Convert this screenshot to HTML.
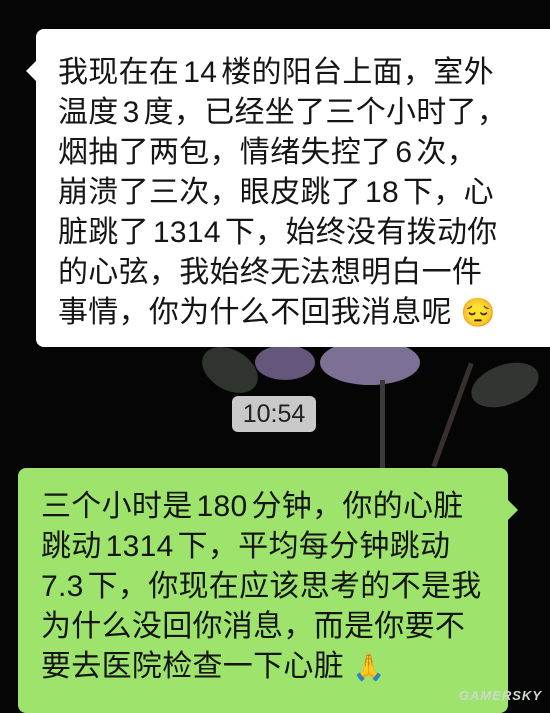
<!DOCTYPE html>
<html><head><meta charset="utf-8"><style>
body{margin:0;width:550px;height:707px;background:#050505;overflow:hidden;position:relative;font-family:"Liberation Sans","Noto Sans CJK SC",sans-serif;}
.petal{position:absolute;border-radius:50%;}
.b1{position:absolute;left:36px;top:29px;width:530px;height:318px;background:#fff;border-radius:8px;}
.b1:before{content:"";position:absolute;left:-10px;top:32px;border:10px solid transparent;border-right-color:#fff;border-left:0;}
.t{position:absolute;font-size:30px;line-height:40px;color:#151515;white-space:nowrap;letter-spacing:0.3px}
.n{margin:0 4px}
.ts{position:absolute;left:232px;top:396px;width:84px;height:36px;background:#c9c9c9;border-radius:6px;font-size:25px;line-height:36px;text-align:center;color:#222}
.b2{position:absolute;left:18px;top:468px;width:490px;height:245px;background:#9de36c;border-radius:8px;}
.b2:after{content:"";position:absolute;right:-10px;top:32px;border:10px solid transparent;border-left-color:#9de36c;border-right:0;}
.wm{position:absolute;right:8px;bottom:4px;color:#cfd8cc;font-weight:bold;font-style:italic;font-size:13px;letter-spacing:1px}
</style></head><body>
<div class="petal" style="left:255px;top:345px;width:60px;height:35px;background:#7d6b9a;opacity:.8"></div>
<div class="petal" style="left:320px;top:340px;width:100px;height:45px;background:#9a8cb8;opacity:.8"></div>
<div class="petal" style="left:200px;top:350px;width:60px;height:40px;background:#3a4038;opacity:.8;transform:rotate(30deg)"></div>
<div class="petal" style="left:470px;top:365px;width:70px;height:40px;background:#3d413c;opacity:.8;transform:rotate(-20deg)"></div>
<div style="position:absolute;left:380px;top:380px;width:5px;height:90px;background:#3a3a38"></div>
<div style="position:absolute;left:450px;top:360px;width:5px;height:110px;background:#3a2e2e;transform:rotate(20deg)"></div>
<div class="b1"></div>
<div class="t" style="left:58px;top:53px">我现在在<span class="n">14</span>楼的阳台上面，室外<br>温度<span class="n">3</span>度，已经坐了三个小时了，<br>烟抽了两包，情绪失控了<span class="n">6</span>次，<br>崩溃了三次，眼皮跳了<span class="n">18</span>下，心<br>脏跳了<span class="n">1314</span>下，始终没有拨动你<br>的心弦，我始终无法想明白一件<br>事情，你为什么不回我消息呢 <span style="font-size:28px">😔</span></div>
<div class="ts">10:54</div>
<div class="b2"></div>
<div class="t" style="left:41px;top:487px">三个小时是<span class="n">180</span>分钟，你的心脏<br>跳动<span class="n">1314</span>下，平均每分钟跳动<br>7.3<span style="margin-left:4px"></span>下，你现在应该思考的不是我<br>为什么没回你消息，而是你要不<br>要去医院检查一下心脏 <span style="font-size:26px">🙏</span></div>
<div class="wm">GAMERSKY</div>
</body></html>
